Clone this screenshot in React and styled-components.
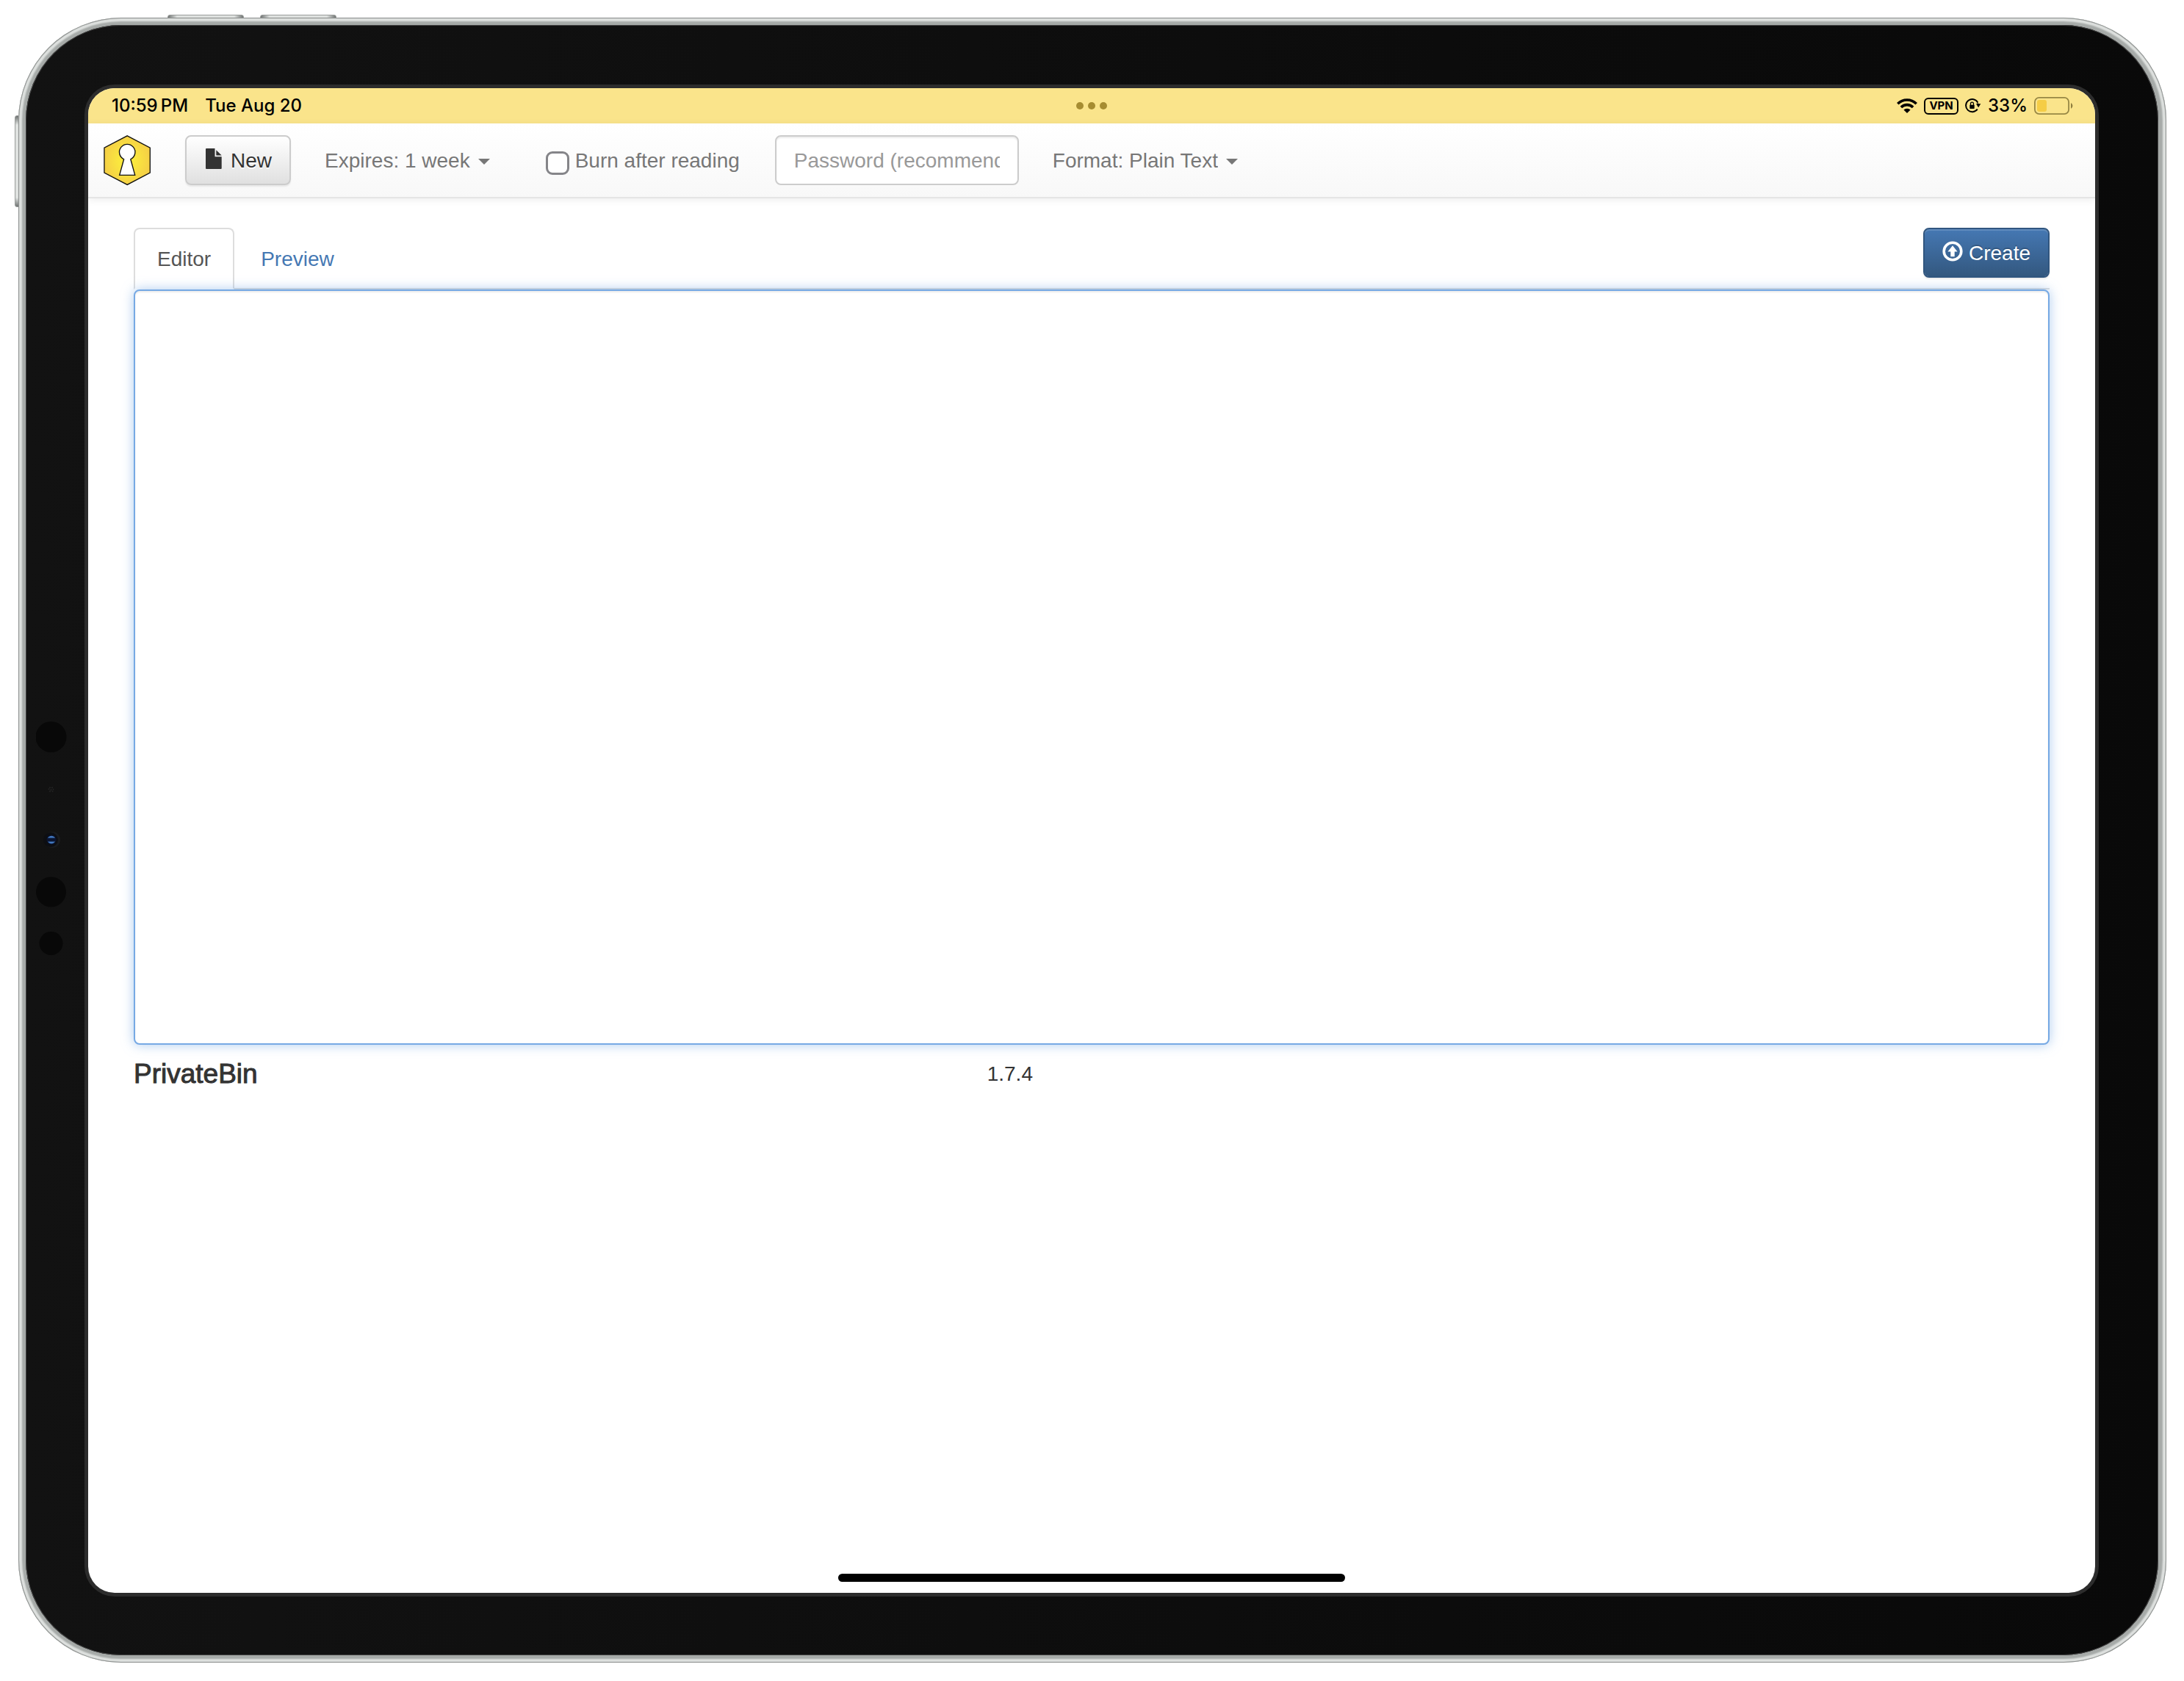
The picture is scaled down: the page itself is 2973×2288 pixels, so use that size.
import React, { useState } from "react";
import styled, { createGlobalStyle, css } from "styled-components";

const GlobalStyle = createGlobalStyle`
  *, *::before, *::after { box-sizing: border-box; }
  html, body { margin: 0; background: #fff; }
  body {
    font-family: "Liberation Sans", Arial, sans-serif;
    font-size: 28px;
    line-height: 40px;
    color: #333;
  }
  button, input, select, textarea { font: inherit; color: inherit; margin: 0; }
`;

/* ---------- tablet shell ---------- */

const Stage = styled.div`
  position: relative;
  display: flex;
  min-height: 100vh;
  padding: 24px 24px 25px 25px;
`;

const metalEnd = css`#6f7372`;

const HardwareButton = styled.span`
  position: absolute;
  border-radius: 3px;
  border: 1px solid #9a9d9b;
  ${({ $side, $at, $length }) =>
    $side === "top"
      ? css`
          top: 20px;
          left: ${$at}px;
          width: ${$length}px;
          height: 8px;
          background: linear-gradient(90deg, ${metalEnd}, #dfe2e0 12px, #dfe2e0 calc(100% - 12px), ${metalEnd});
        `
      : css`
          left: 20px;
          top: ${$at}px;
          height: ${$length}px;
          width: 8px;
          background: linear-gradient(180deg, ${metalEnd}, #dfe2e0 12px, #dfe2e0 calc(100% - 12px), ${metalEnd});
        `}
`;

const Chassis = styled.div`
  position: relative;
  flex: 1;
  display: flex;
  padding: 10px 11px 10px 10px;
  border-radius: 140px;
  background: #a6aaa8;
  box-shadow: inset 0 0 0 1px #8f9291, inset 0 0 0 2px #d4d7d5, inset 0 0 2px 5px #dfe2e0;
`;

const Glass = styled.div`
  flex: 1;
  display: grid;
  grid-template-columns: 85px minmax(0, 1fr) 86px;
  padding: 86px 0 85px;
  border-radius: 130px;
  background: linear-gradient(90deg, #121212, #090909);
  box-shadow: inset 0 0 0 1px #444;
`;

const Sensors = styled.svg`
  align-self: center;
  margin-left: 14px;
  width: 42px;
  height: 324px;
`;

const Screen = styled.div`
  position: relative;
  display: flex;
  flex-direction: column;
  overflow: hidden;
  border-radius: 36px;
  background: #fff;
`;

const ScreenEdge = styled.div`
  display: grid;
  border-radius: 36px;
  box-shadow: 0 0 0 5px #2c2c2c;
`;

const HomeIndicator = styled.div`
  position: absolute;
  left: 50%;
  bottom: 15px;
  width: 690px;
  height: 11px;
  margin-left: -345px;
  border-radius: 6px;
  background: #000;
`;

/* ---------- status bar ---------- */

const StatusBar = styled.header`
  display: grid;
  grid-template-columns: 1fr auto 1fr;
  align-items: center;
  height: 48px;
  padding: 0 30px;
  background: #fae48b;
  color: #000;
  font-family: Inter, sans-serif;
  font-size: 24px;
  font-weight: 500;
`;

const StatusGroup = styled.div`
  display: flex;
  align-items: center;
  justify-content: ${({ $end }) => ($end ? "flex-end" : "flex-start")};
  gap: ${({ $end }) => ($end ? 9 : 23)}px;
  padding-left: 2px;
`;

const Multitask = styled.div`
  display: flex;
  gap: 6px;
`;

const Dot = styled.i`
  width: 10px;
  height: 10px;
  border-radius: 50%;
  background: #a68c31;
`;

const Vpn = styled.span`
  display: flex;
  align-items: center;
  justify-content: center;
  width: 47px;
  height: 23px;
  border: 2px solid #000;
  border-radius: 6px;
  font-size: 15px;
  font-weight: 700;
`;

/* ---------- navigation bar ---------- */

const Navbar = styled.nav`
  display: flex;
  align-items: center;
  gap: 46px;
  height: 102px;
  padding: 0 21px;
  border-bottom: 2px solid #e5e5e5;
  background: linear-gradient(#fff, #f8f8f8);
  box-shadow: 0 2px 10px rgba(0, 0, 0, 0.075);
  color: #777;
`;

const Brand = styled.a`
  display: flex;
  width: 65px;
`;

const buttonLooks = {
  plain: css`
    color: #333;
    border-color: #ccc;
    background: linear-gradient(#fff, #e0e0e0);
    text-shadow: 0 2px 0 #fff;
    box-shadow: inset 0 2px 0 rgba(255, 255, 255, 0.15), 0 2px 2px rgba(0, 0, 0, 0.075);
  `,
  primary: css`
    color: #fff;
    border-color: #31567f;
    background: linear-gradient(#4578b3, #33587f);
    background-clip: padding-box;
    background-color: #31567f;
    text-shadow: 0 -2px 0 rgba(0, 0, 0, 0.2);
    box-shadow: inset 0 2px 0 rgba(255, 255, 255, 0.15), 0 2px 2px rgba(0, 0, 0, 0.075);
  `,
};

const Button = styled.button`
  display: flex;
  align-items: center;
  gap: 8px;
  height: 68px;
  padding: 2px 24px 0;
  border: 2px solid;
  border-radius: 8px;
  cursor: pointer;
  ${({ $look }) => buttonLooks[$look]}
`;

const Glyph = styled.svg`
  width: 28px;
  height: 28px;
  margin-bottom: 6px;
  fill: currentColor;
`;

const Dropdown = styled.label`
  display: flex;
  align-items: center;
  gap: 11px;
  padding: 2px 30px 0 0;
`;

const Select = styled.select`
  appearance: none;
  field-sizing: content;
  height: 40px;
  padding: 0;
  border: 0;
  background: none;
  cursor: pointer;
`;

const Caret = styled.i`
  border: 8px solid transparent;
  border-top-color: currentColor;
  border-bottom: 0;
  margin-top: 2px;
`;

const CheckLabel = styled.label`
  display: flex;
  align-items: center;
  gap: 8px;
  padding-top: 2px;
`;

const Checkbox = styled.input`
  appearance: none;
  width: 32px;
  height: 32px;
  margin-top: 6px;
  border: 3px solid #858589;
  border-radius: 9px;
  background: #fff;
  &:checked { background: #4578b3; }
`;

const Password = styled.input`
  width: 332px;
  height: 68px;
  margin-left: 2px;
  padding: 2px 24px 0;
  border: 2px solid #ccc;
  border-radius: 8px;
  background: #fff;
  color: #555;
  outline: none;
  box-shadow: inset 0 2px 2px rgba(0, 0, 0, 0.075);
  &::placeholder { color: #999; opacity: 1; }
`;

/* ---------- editor ---------- */

const Main = styled.main`
  padding: 40px 62px 0;
`;

const TabRow = styled.div`
  display: flex;
  justify-content: space-between;
  align-items: flex-start;
  height: 84px;
  border-bottom: 2px solid #ddd;
`;

const Tabs = styled.div`
  display: flex;
  gap: 4px;
`;

const Tab = styled.button`
  height: 84px;
  padding: 2px 30px 0;
  border: 2px solid transparent;
  border-radius: 8px 8px 0 0;
  background: none;
  color: #4578b3;
  cursor: pointer;
  ${({ $active }) =>
    $active &&
    css`
      border-color: #ddd #ddd #fff;
      background: #fff;
      color: #555;
    `}
`;

const Editor = styled.textarea`
  position: relative;
  display: block;
  width: 100%;
  height: 1028px;
  padding: 12px 24px;
  border: 2px solid #76a9e4;
  border-radius: 8px;
  background: #fff;
  color: #555;
  outline: none;
  resize: none;
  box-shadow: inset 0 2px 2px rgba(0, 0, 0, 0.075), 0 0 16px rgba(118, 169, 228, 0.6);
`;

const Footer = styled.footer`
  display: grid;
  grid-template-columns: 5fr 1fr 6fr;
  align-items: center;
  margin: 0 -30px;
  padding-top: 20px;
`;

const Title = styled.h4`
  margin: 0;
  padding-left: 30px;
  font-size: 37px;
  font-weight: 400;
  -webkit-text-stroke: 1px currentColor;
`;

const Version = styled.p`
  margin: 0;
  text-align: center;
`;

/* ---------- drawings ---------- */

const CameraArray = () => (
  <Sensors viewBox="0 0 42 324" aria-hidden="true">
    <circle cx="20.5" cy="21" r="21" fill="#080808" />
    <g fill="#242424">
      <circle cx="19" cy="90" r="1" />
      <circle cx="22" cy="90" r="1" />
      <circle cx="20.5" cy="93" r="1" />
      <circle cx="17.5" cy="92" r="1" />
      <circle cx="23.5" cy="92.5" r="1" />
      <circle cx="19" cy="95" r="1" />
      <circle cx="22.5" cy="95" r="1" />
    </g>
    <circle cx="22" cy="161" r="11" fill="#1a1b1d" />
    <circle cx="20" cy="161" r="10" fill="#0d0e12" />
    <circle cx="21" cy="161" r="6.5" fill="#0a1430" />
    <path d="M16 158.500A6 6 0 0 1 26 158.500Z" fill="#4379c0" />
    <path d="M16 163.500A6 6 0 0 0 26 163.500Z" fill="#4379c0" />
    <circle cx="20.500" cy="232" r="20.500" fill="#080808" />
    <circle cx="20.500" cy="302" r="16" fill="#080808" />
  </Sensors>
);

const Logo = () => (
  <svg width="68" height="72" viewBox="0 0 68 72" role="img" aria-label="PrivateBin">
    <defs>
      <radialGradient id="brandGlow">
        <stop offset="0" stopColor="#fcee3c" />
        <stop offset="0.4" stopColor="#fae63f" />
        <stop offset="1" stopColor="#f5d045" />
      </radialGradient>
    </defs>
    <path
      d="M33.700 1.300L66.200 18.500V54L33.700 71L1 54V18.500Z"
      fill="url(#brandGlow)"
      stroke="#111"
      strokeWidth="1.400"
    />
    <path
      d="M28.900 34.700A11.200 11.200 0 1 1 38.500 34.700L44.700 57.300H22.700Z"
      fill="#fff"
      stroke="#111"
      strokeWidth="1.400"
    />
  </svg>
);

const FileGlyph = () => (
  <Glyph viewBox="0 0 28 28" aria-hidden="true">
    <path d="M3 0H14.500V11.300H23.700V27Q23.700 28 22.700 28H3Q2 28 2 27V1Q2 0 3 0Z" />
    <path d="M16.300 2.300L23.700 9.600H16.300Z" />
  </Glyph>
);

const UploadGlyph = () => (
  <Glyph viewBox="0 0 28 28" aria-hidden="true">
    <circle cx="14" cy="14" r="11.800" fill="none" stroke="currentColor" strokeWidth="3.600" />
    <path d="M14 6.300L20.600 14.400H16.700V21.300H11.300V14.400H7.400Z" />
  </Glyph>
);

const Wifi = () => (
  <svg width="28" height="20" viewBox="0 0 28 20" aria-hidden="true">
    <g fill="none" stroke="#000" strokeWidth="3.600">
      <path d="M1.300 7.300A18 18 0 0 1 26.700 7.300" />
      <path d="M5.900 12A11.500 11.500 0 0 1 22.100 12" />
    </g>
    <path d="M14 20L9.400 15.500A6.600 6.600 0 0 1 18.600 15.500Z" />
  </svg>
);

const RotationLock = () => (
  <svg width="22" height="20" viewBox="0 0 22 20" aria-hidden="true">
    <path d="M17.300 5.600A8.600 8.600 0 1 0 16.800 14.500" fill="none" stroke="#000" strokeWidth="2" />
    <path d="M15 7.300H21.300L18.100 12.200Z" />
    <path d="M16.200 4.500L19 8.500H17Z" />
    <rect x="6.300" y="8.700" width="6.400" height="5.400" rx="0.800" />
    <path d="M7.500 9V7.200A2 2 0 0 1 11.500 7.200V9" fill="none" stroke="#000" strokeWidth="1.300" />
  </svg>
);

const Battery = () => (
  <svg width="53" height="24" viewBox="0 0 53 24" aria-hidden="true">
    <rect x="0.900" y="0.900" width="46.200" height="22.200" rx="6" fill="none" stroke="#978744" strokeWidth="1.800" />
    <rect x="4" y="4" width="13" height="16" rx="3" fill="#f5cd45" />
    <path d="M50 8A4.500 4.500 0 0 1 50 16Z" fill="#8f7f3f" />
  </svg>
);

/* ---------- page ---------- */

const TABS = ["Editor", "Preview"];

export default function App() {
  const [tab, setTab] = useState("Editor");
  return (
    <Stage>
      <GlobalStyle />
      <HardwareButton $side="top" $at={228} $length={104} />
      <HardwareButton $side="top" $at={354} $length={104} />
      <HardwareButton $side="left" $at={157} $length={125} />
      <Chassis>
        <Glass>
          <CameraArray />
          <ScreenEdge>
            <Screen>
              <StatusBar>
                <StatusGroup>
                  <span>10:59{"\u2009"}PM</span>
                  <span>Tue Aug 20</span>
                </StatusGroup>
                <Multitask>
                  <Dot />
                  <Dot />
                  <Dot />
                </Multitask>
                <StatusGroup $end>
                  <Wifi />
                  <Vpn>VPN</Vpn>
                  <RotationLock />
                  <span>33%</span>
                  <Battery />
                </StatusGroup>
              </StatusBar>
              <Navbar>
                <Brand href="#">
                  <Logo />
                </Brand>
                <Button type="button" $look="plain">
                  <FileGlyph />
                  New
                </Button>
                <Dropdown>
                  <Select aria-label="Expires" defaultValue="1week">
                    <option value="1week">Expires: 1 week</option>
                  </Select>
                  <Caret />
                </Dropdown>
                <CheckLabel>
                  <Checkbox type="checkbox" />
                  Burn after reading
                </CheckLabel>
                <Password type="password" aria-label="Password" placeholder="Password (recommended)" />
                <Dropdown>
                  <Select aria-label="Format" defaultValue="plain">
                    <option value="plain">Format: Plain Text</option>
                  </Select>
                  <Caret />
                </Dropdown>
              </Navbar>
              <Main>
                <TabRow>
                  <Tabs role="tablist">
                    {TABS.map((name) => (
                      <Tab
                        key={name}
                        type="button"
                        role="tab"
                        aria-selected={tab === name}
                        $active={tab === name}
                        onClick={() => setTab(name)}
                      >
                        {name}
                      </Tab>
                    ))}
                  </Tabs>
                  <Button type="button" $look="primary">
                    <UploadGlyph />
                    Create
                  </Button>
                </TabRow>
                <Editor aria-label="Paste text" />
                <Footer>
                  <Title>PrivateBin</Title>
                  <Version>1.7.4</Version>
                </Footer>
              </Main>
              <HomeIndicator />
            </Screen>
          </ScreenEdge>
        </Glass>
      </Chassis>
    </Stage>
  );
}
